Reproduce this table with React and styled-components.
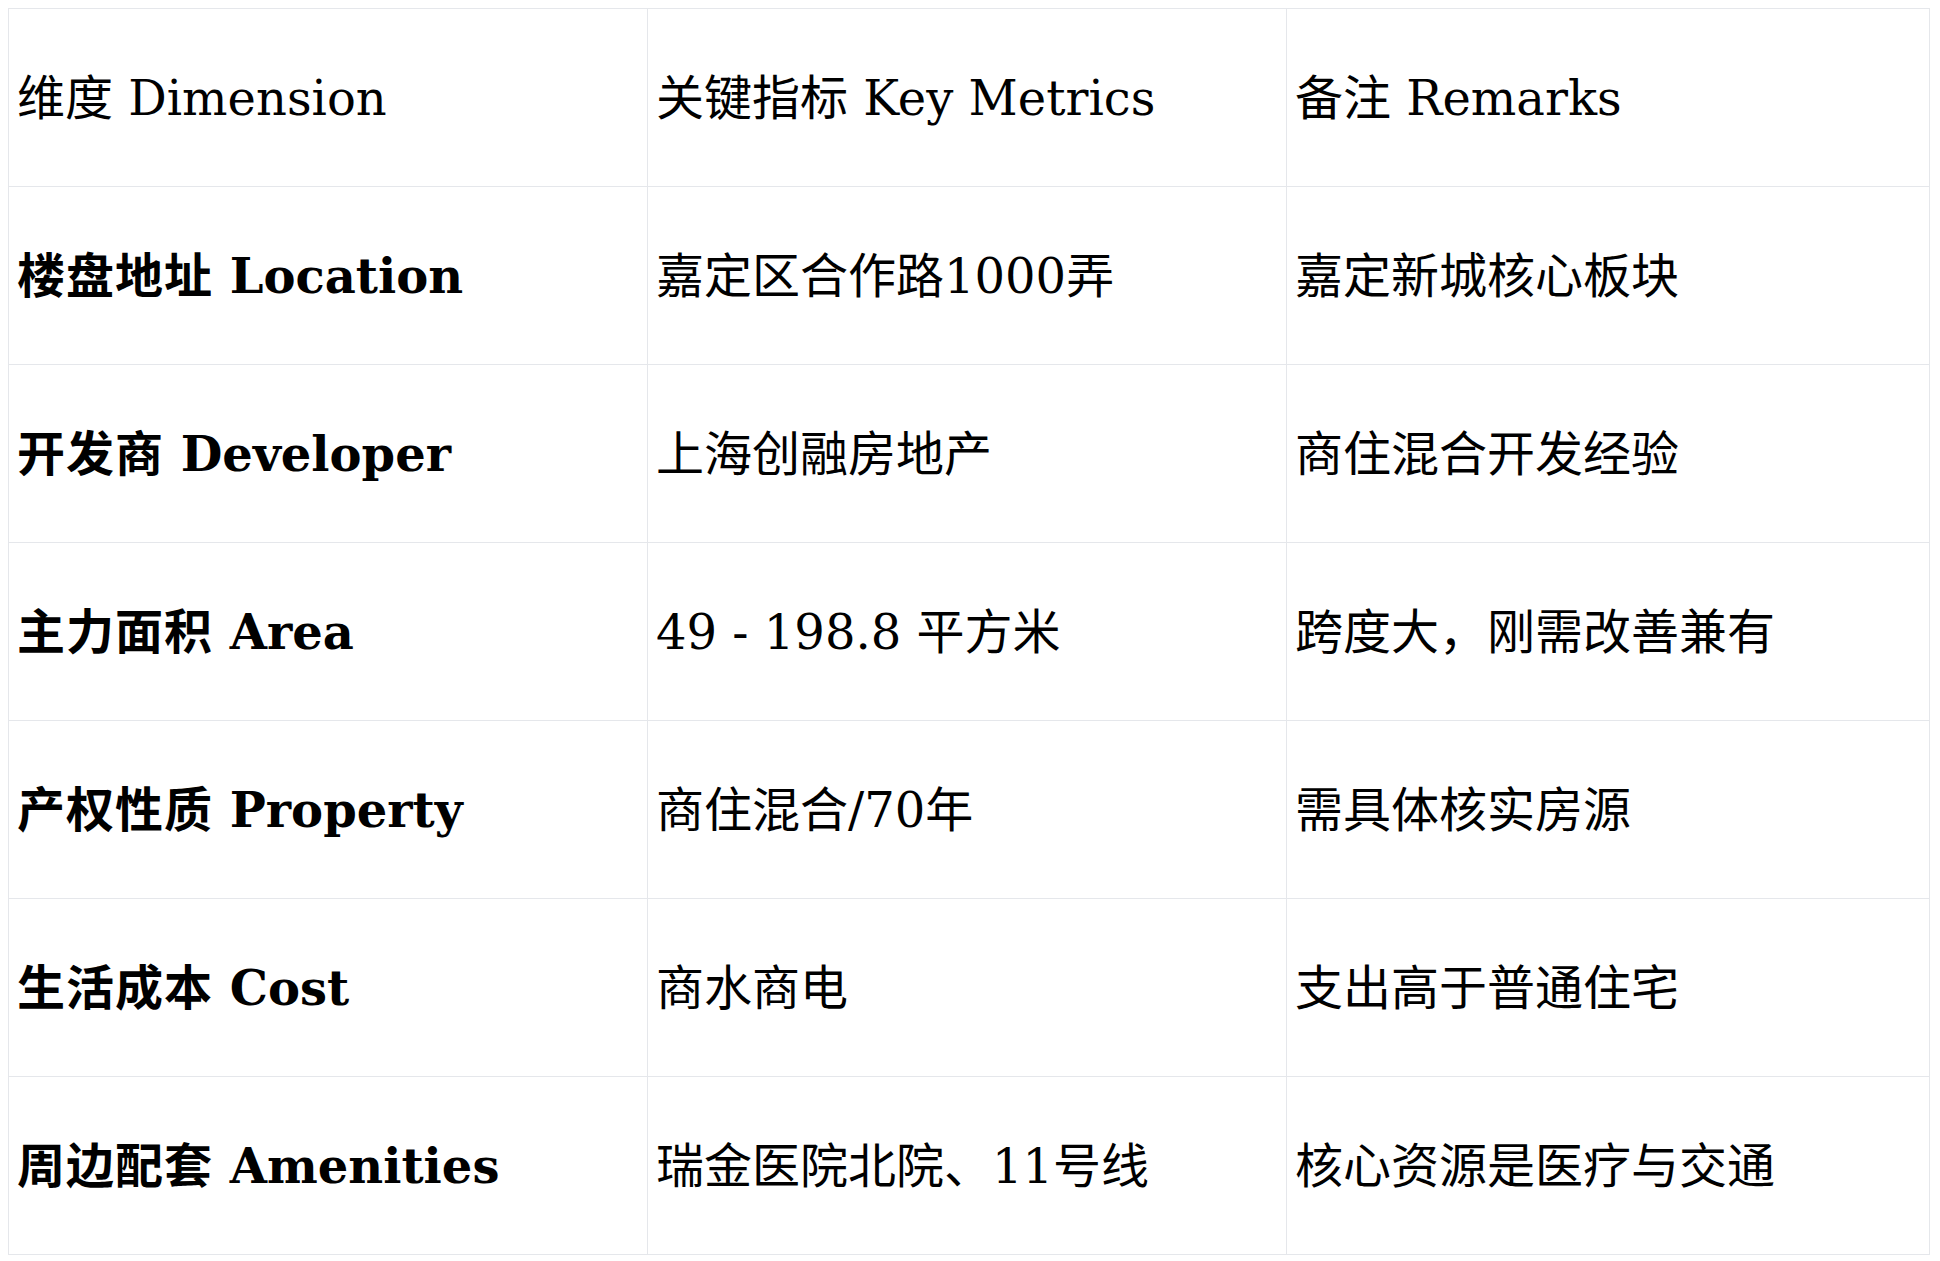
import React from "react";
import styled, { createGlobalStyle } from "styled-components";

const Global = createGlobalStyle`
  html, body { margin: 0; padding: 0; background: #ffffff; }
  body { padding: 8px; font-family: "DejaVu Serif", "Noto Sans CJK SC", serif; color: #000; }
`;

const Table = styled.table`
  border-collapse: collapse;
  width: 1921px;
  table-layout: fixed;
  font-family: "DejaVu Serif", "Noto Sans CJK SC", serif;
  font-size: 48px;
  line-height: 1.2;
`;

const Col = styled.col`
  width: ${(p) => p.$w}px;
`;

const Row = styled.tr`
  height: 178px;
`;

const HeadCell = styled.th`
  border: 1px solid #e5e7eb;
  padding: 2px 8px 0;
  text-align: left;
  font-weight: normal;
  vertical-align: middle;
  white-space: nowrap;
`;

const Cell = styled.td`
  border: 1px solid #e5e7eb;
  padding: 2px 8px 0;
  text-align: left;
  vertical-align: middle;
  white-space: nowrap;
  font-weight: ${(p) => (p.$bold ? "bold" : "normal")};
`;

const Cjk = styled.span`
  letter-spacing: 1px;
`;

const rows = [
  [["楼盘地址", "Location"], "嘉定区合作路1000弄", "嘉定新城核心板块"],
  [["开发商", "Developer"], "上海创融房地产", "商住混合开发经验"],
  [["主力面积", "Area"], "49 - 198.8 平方米", "跨度大，刚需改善兼有"],
  [["产权性质", "Property"], "商住混合/70年", "需具体核实房源"],
  [["生活成本", "Cost"], "商水商电", "支出高于普通住宅"],
  [["周边配套", "Amenities"], "瑞金医院北院、11号线", "核心资源是医疗与交通"],
];

export default function App() {
  return (
    <>
      <Global />
      <Table>
        <colgroup>
          <Col $w={639} />
          <Col $w={639} />
          <Col $w={643} />
        </colgroup>
        <thead>
          <Row>
            <HeadCell>维度 Dimension</HeadCell>
            <HeadCell>关键指标 Key Metrics</HeadCell>
            <HeadCell>备注 Remarks</HeadCell>
          </Row>
        </thead>
        <tbody>
          {rows.map((r) => (
            <Row key={r[0][1]}>
              <Cell $bold>
                <Cjk>{r[0][0]}</Cjk> {r[0][1]}
              </Cell>
              <Cell>{r[1]}</Cell>
              <Cell>{r[2]}</Cell>
            </Row>
          ))}
        </tbody>
      </Table>
    </>
  );
}
